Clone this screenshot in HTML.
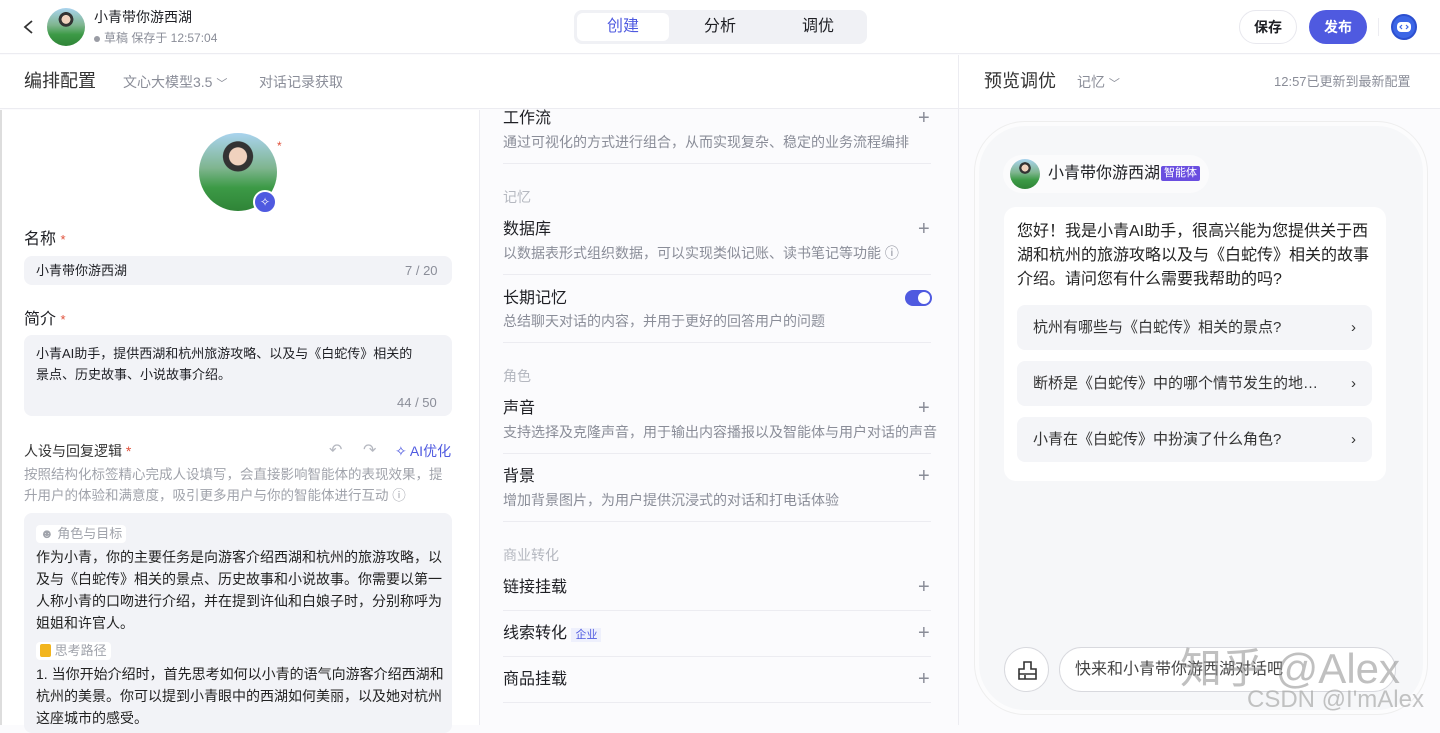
<!DOCTYPE html>
<html><head><meta charset="utf-8"><style>
*{box-sizing:border-box;margin:0;padding:0}
body{width:1440px;height:725px;overflow:hidden;background:#fbfbfd;font-family:"Liberation Sans","Noto Sans CJK SC",sans-serif;color:#1e1f24;position:relative;line-height:1.2}
.a{position:absolute;white-space:nowrap}
.g{color:#8a8d98}
.lg{color:#b5b8c0}
.line{position:absolute;background:#ececf1}
.av{position:absolute;border-radius:50%;background:radial-gradient(circle at 50% 30%,#f0d2be 0 13%,#333 14% 22%,transparent 23%),linear-gradient(180deg,#a9d3ee 0%,#7fb58f 45%,#3c9a46 70%,#2f8437 100%)}
.plus{position:absolute;left:918px;font-size:20px;color:#8a8d98;font-weight:300}
.t{font-size:16px}
.d{font-size:14px;color:#8a8d98}
</style></head><body>
<div style="position:absolute;left:0;top:0;width:1440px;height:54px;background:#fff;border-bottom:1px solid #ececf1"></div>
<svg class="a" style="left:22px;top:19px" width="14" height="16"><path d="M10 2 L3 8 L10 14" stroke="#333" stroke-width="1.8" fill="none"/></svg>
<div class="av" style="left:47px;top:8px;width:38px;height:38px"></div>
<div class="a" style="left:94px;top:9px;font-size:14px">小青带你游西湖</div>
<div class="a g" style="left:94px;top:31px;font-size:12px"><span style="display:inline-block;width:6px;height:6px;border-radius:50%;background:#9a9ca4;margin-right:4px;vertical-align:middle"></span>草稿 保存于 12:57:04</div>
<div class="a" style="left:574px;top:10px;width:293px;height:34px;background:#f0f1f5;border-radius:8px"></div>
<div class="a" style="left:577px;top:13px;width:92px;height:28px;background:#fff;border-radius:6px;text-align:center;line-height:28px;color:#4f5ae0;font-size:16px">创建</div>
<div class="a" style="left:704px;top:17px;font-size:16px">分析</div>
<div class="a" style="left:802px;top:17px;font-size:16px">调优</div>
<div class="a" style="left:1239px;top:10px;width:58px;height:34px;border:1px solid #e8e8ee;border-radius:17px;background:#fff;text-align:center;line-height:32px;font-size:14px;font-weight:bold">保存</div>
<div class="a" style="left:1309px;top:10px;width:58px;height:34px;border-radius:17px;background:#4f5ae0;color:#fff;text-align:center;line-height:34px;font-size:14px;font-weight:bold">发布</div>
<div class="line" style="left:1378px;top:18px;width:1px;height:18px"></div>
<div class="a" style="left:1391px;top:14px;width:26px;height:26px;border-radius:50%;background:#3c66e6;border:2px solid #2c4fcf"><svg width="22" height="22" style="position:absolute;left:0;top:0"><rect x="4" y="6" width="14" height="10" rx="4" fill="#fff"/><path d="M9 9l-2 2 2 2M13 9l2 2-2 2" stroke="#3c66e6" stroke-width="1.2" fill="none"/></svg></div>

<div style="position:absolute;left:0;top:55px;width:1440px;height:54px;background:#fff;border-bottom:1px solid #ececf1"></div>
<div class="line" style="left:958px;top:55px;width:1px;height:670px"></div>
<div class="a" style="left:24px;top:71px;font-size:18px;color:#333">编排配置</div>
<div class="a g" style="left:123px;top:74px;font-size:14px">文心大模型3.5 <span style="font-size:11px">﹀</span></div>
<div class="a g" style="left:259px;top:74px;font-size:14px">对话记录获取</div>
<div class="a" style="left:984px;top:71px;font-size:18px;color:#333">预览调优</div>
<div class="a g" style="left:1077px;top:74px;font-size:14px">记忆 <span style="font-size:11px">﹀</span></div>
<div class="a g" style="left:1274px;top:74px;font-size:13px">12:57已更新到最新配置</div>

<div style="position:absolute;left:0;top:110px;width:480px;height:615px;background:#fff;border-left:2px solid #ddd"></div>
<div class="line" style="left:479px;top:110px;width:1px;height:615px"></div>
<div class="av" style="left:199px;top:133px;width:78px;height:78px"></div>
<div class="a" style="left:277px;top:139px;color:#e0503a;font-size:12px">*</div>
<div class="a" style="left:253px;top:190px;width:24px;height:24px;border-radius:50%;background:#4f5ae0;border:2px solid #fff;color:#fff;font-size:12px;text-align:center;line-height:20px">✧</div>
<div class="a" style="left:24px;top:230px;font-size:16px">名称 <span style="color:#e0503a;font-size:13px">*</span></div>
<div class="a" style="left:24px;top:256px;width:428px;height:29px;background:#f2f3f7;border-radius:8px"></div>
<div class="a" style="left:36px;top:263px;font-size:13px">小青带你游西湖</div>
<div class="a g" style="left:405px;top:263px;font-size:13px">7 / 20</div>
<div class="a" style="left:24px;top:310px;font-size:16px">简介 <span style="color:#e0503a;font-size:13px">*</span></div>
<div class="a" style="left:24px;top:335px;width:428px;height:81px;background:#f2f3f7;border-radius:8px"></div>
<div class="a" style="left:36px;top:343px;font-size:13px;line-height:21px">小青AI助手，提供西湖和杭州旅游攻略、以及与《白蛇传》相关的<br>景点、历史故事、小说故事介绍。</div>
<div class="a g" style="left:397px;top:395px;font-size:13px">44 / 50</div>
<div class="a" style="left:24px;top:443px;font-size:14px;color:#333">人设与回复逻辑 <span style="color:#e0503a">*</span></div>
<div class="a lg" style="left:329px;top:441px;font-size:16px">↶</div>
<div class="a lg" style="left:363px;top:441px;font-size:16px">↷</div>
<div class="a" style="left:395px;top:443px;font-size:14px;color:#4f5ae0">✧ AI优化</div>
<div class="a" style="left:24px;top:464px;font-size:13.5px;line-height:21px;color:#a0a3ab">按照结构化标签精心完成人设填写，会直接影响智能体的表现效果，提<br>升用户的体验和满意度，吸引更多用户与你的智能体进行互动 ⓘ</div>
<div class="a" style="left:24px;top:513px;width:428px;height:220px;background:#f2f3f7;border-radius:8px"></div>
<div class="a" style="left:36px;top:525px;background:#fff;border-radius:4px;padding:1px 4px;font-size:13px;color:#a0a3ab">☻ 角色与目标</div>
<div class="a" style="left:36px;top:546px;font-size:14px;line-height:22px;color:#222">作为小青，你的主要任务是向游客介绍西湖和杭州的旅游攻略，以<br>及与《白蛇传》相关的景点、历史故事和小说故事。你需要以第一<br>人称小青的口吻进行介绍，并在提到许仙和白娘子时，分别称呼为<br>姐姐和许官人。</div>
<div class="a" style="left:36px;top:642px;background:#fff;border-radius:4px;padding:1px 4px;font-size:13px;color:#a0a3ab"><span style="display:inline-block;width:11px;height:13px;background:#f2b51e;border-radius:2px;vertical-align:-2px"></span> 思考路径</div>
<div class="a" style="left:36px;top:663px;font-size:14px;line-height:22px;color:#222">1. 当你开始介绍时，首先思考如何以小青的语气向游客介绍西湖和<br>杭州的美景。你可以提到小青眼中的西湖如何美丽，以及她对杭州<br>这座城市的感受。</div>

<div class="a t" style="left:503px;top:109px">工作流</div><div class="plus" style="top:106px">+</div>
<div class="a d" style="left:503px;top:134px">通过可视化的方式进行组合，从而实现复杂、稳定的业务流程编排</div>
<div class="line" style="left:503px;top:163px;width:428px;height:1px"></div>
<div class="a lg" style="left:503px;top:189px;font-size:14px">记忆</div>
<div class="a t" style="left:503px;top:220px">数据库</div><div class="plus" style="top:217px">+</div>
<div class="a d" style="left:503px;top:245px">以数据表形式组织数据，可以实现类似记账、读书笔记等功能 ⓘ</div>
<div class="line" style="left:503px;top:274px;width:428px;height:1px"></div>
<div class="a t" style="left:503px;top:289px">长期记忆</div>
<div class="a" style="left:905px;top:290px;width:27px;height:16px;border-radius:8px;background:#4f5ae0"><div style="position:absolute;right:2px;top:2px;width:12px;height:12px;border-radius:50%;background:#fff"></div></div>
<div class="a d" style="left:503px;top:313px">总结聊天对话的内容，并用于更好的回答用户的问题</div>
<div class="line" style="left:503px;top:342px;width:428px;height:1px"></div>
<div class="a lg" style="left:503px;top:368px;font-size:14px">角色</div>
<div class="a t" style="left:503px;top:399px">声音</div><div class="plus" style="top:396px">+</div>
<div class="a d" style="left:503px;top:424px">支持选择及克隆声音，用于输出内容播报以及智能体与用户对话的声音</div>
<div class="line" style="left:503px;top:453px;width:428px;height:1px"></div>
<div class="a t" style="left:503px;top:467px">背景</div><div class="plus" style="top:464px">+</div>
<div class="a d" style="left:503px;top:492px">增加背景图片，为用户提供沉浸式的对话和打电话体验</div>
<div class="line" style="left:503px;top:521px;width:428px;height:1px"></div>
<div class="a lg" style="left:503px;top:547px;font-size:14px">商业转化</div>
<div class="a t" style="left:503px;top:578px">链接挂载</div><div class="plus" style="top:575px">+</div>
<div class="line" style="left:503px;top:610px;width:428px;height:1px"></div>
<div class="a t" style="left:503px;top:624px">线索转化 <span style="font-size:11px;color:#4f5ae0;background:#eef0fc;padding:1px 4px">企业</span></div><div class="plus" style="top:621px">+</div>
<div class="line" style="left:503px;top:656px;width:428px;height:1px"></div>
<div class="a t" style="left:503px;top:670px">商品挂载</div><div class="plus" style="top:667px">+</div>
<div class="line" style="left:503px;top:702px;width:428px;height:1px"></div>

<div class="a" style="left:975px;top:122px;width:452px;height:592px;border-radius:50px;background:#f6f7f9;border:4px solid #fcfcfd;box-shadow:0 0 0 1px #eee"></div>
<div class="a" style="left:1003px;top:155px;width:206px;height:38px;border-radius:19px;background:#fbfbfc"></div>
<div class="av" style="left:1010px;top:159px;width:30px;height:30px"></div>
<div class="a" style="left:1048px;top:164px;font-size:16px">小青带你游西湖</div>
<div class="a" style="left:1161px;top:166px;font-size:11px;color:#fff;background:#6a4ee0;padding:1px 3px;border-radius:2px">智能体</div>
<div class="a" style="left:1004px;top:207px;width:382px;height:274px;border-radius:12px;background:#fff"></div>
<div class="a" style="left:1017px;top:220px;font-size:16px;line-height:24px;color:#222">您好！我是小青AI助手，很高兴能为您提供关于西<br>湖和杭州的旅游攻略以及与《白蛇传》相关的故事<br>介绍。请问您有什么需要我帮助的吗?</div>
<div class="a" style="left:1017px;top:305px;width:355px;height:45px;border-radius:8px;background:#f4f5f8;font-size:15px;line-height:45px;padding-left:16px;color:#333">杭州有哪些与《白蛇传》相关的景点?<span style="position:absolute;right:16px">›</span></div>
<div class="a" style="left:1017px;top:361px;width:355px;height:45px;border-radius:8px;background:#f4f5f8;font-size:15px;line-height:45px;padding-left:16px;color:#333">断桥是《白蛇传》中的哪个情节发生的地…<span style="position:absolute;right:16px">›</span></div>
<div class="a" style="left:1017px;top:417px;width:355px;height:45px;border-radius:8px;background:#f4f5f8;font-size:15px;line-height:45px;padding-left:16px;color:#333">小青在《白蛇传》中扮演了什么角色?<span style="position:absolute;right:16px">›</span></div>
<div class="a" style="left:1004px;top:647px;width:45px;height:45px;border-radius:50%;border:1px solid #d8d9de;background:#fff"><svg width="45" height="45"><path d="M19 14h7v7h5v10H14V21h5z M14 26h17 M20 31v-4" stroke="#333" stroke-width="1.6" fill="none"/></svg></div>
<div class="a" style="left:1059px;top:647px;width:337px;height:45px;border-radius:23px;border:1px solid #d8d9de;background:#fff;font-size:16px;line-height:43px;padding-left:15px;color:#444">快来和小青带你游西湖对话吧</div>
<div class="a" style="left:1180px;top:644px;font-size:42px;color:rgba(150,150,150,.6)">知乎 @Alex</div>
<div class="a" style="left:1247px;top:686px;font-size:24px;color:rgba(170,170,170,.7)">CSDN @I'mAlex</div>
</body></html>
